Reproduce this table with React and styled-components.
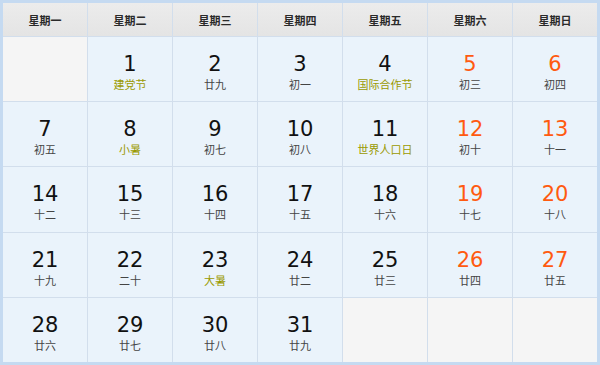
import React from "react";
import styled, { createGlobalStyle } from "styled-components";

const Global = createGlobalStyle`
  html, body { margin: 0; padding: 0; background: #fff; }
  * { box-sizing: border-box; }
`;

const Calendar = styled.div`
  width: 600px;
  height: 365px;
  border: 3px solid #c5daf1;
  background: #d2deec;
  display: grid;
  grid-template-columns: repeat(7, 1fr);
  grid-template-rows: 33px repeat(5, 1fr);
  gap: 1px;
  font-family: "Noto Sans CJK SC", "DejaVu Sans", sans-serif;
`;

const Head = styled.div`
  background: linear-gradient(#ececec, #e4e4e4);
  display: flex;
  align-items: center;
  justify-content: center;
  font-size: 11px;
  font-weight: bold;
  color: #2a2a2a;
`;

const Cell = styled.div`
  background: ${(p) => (p.$empty ? "#f5f5f5" : "#eaf3fb")};
  display: flex;
  flex-direction: column;
  align-items: center;
  justify-content: center;
  padding-top: 5px;
`;

const Num = styled.div`
  font-family: "DejaVu Sans", Verdana, sans-serif;
  font-size: 21px;
  line-height: 26px;
  color: ${(p) => (p.$weekend ? "#ff5a10" : "#111")};
`;

const Lunar = styled.div`
  font-size: 11px;
  line-height: 15px;
  color: ${(p) => (p.$holiday ? "#9a9a00" : "#444")};
`;

const heads = ["星期一", "星期二", "星期三", "星期四", "星期五", "星期六", "星期日"];

const days = [
  null,
  [1, "建党节", true],
  [2, "廿九"],
  [3, "初一"],
  [4, "国际合作节", true],
  [5, "初三"],
  [6, "初四"],
  [7, "初五"],
  [8, "小暑", true],
  [9, "初七"],
  [10, "初八"],
  [11, "世界人口日", true],
  [12, "初十"],
  [13, "十一"],
  [14, "十二"],
  [15, "十三"],
  [16, "十四"],
  [17, "十五"],
  [18, "十六"],
  [19, "十七"],
  [20, "十八"],
  [21, "十九"],
  [22, "二十"],
  [23, "大暑", true],
  [24, "廿二"],
  [25, "廿三"],
  [26, "廿四"],
  [27, "廿五"],
  [28, "廿六"],
  [29, "廿七"],
  [30, "廿八"],
  [31, "廿九"],
  null,
  null,
  null,
];

export default function App() {
  return (
    <>
      <Global />
      <Calendar>
        {heads.map((h) => (
          <Head key={h}>{h}</Head>
        ))}
        {days.map((d, i) => {
          if (!d) return <Cell key={i} $empty />;
          const weekend = i % 7 >= 5;
          return (
            <Cell key={i}>
              <Num $weekend={weekend}>{d[0]}</Num>
              <Lunar $holiday={d[2]}>{d[1]}</Lunar>
            </Cell>
          );
        })}
      </Calendar>
    </>
  );
}
